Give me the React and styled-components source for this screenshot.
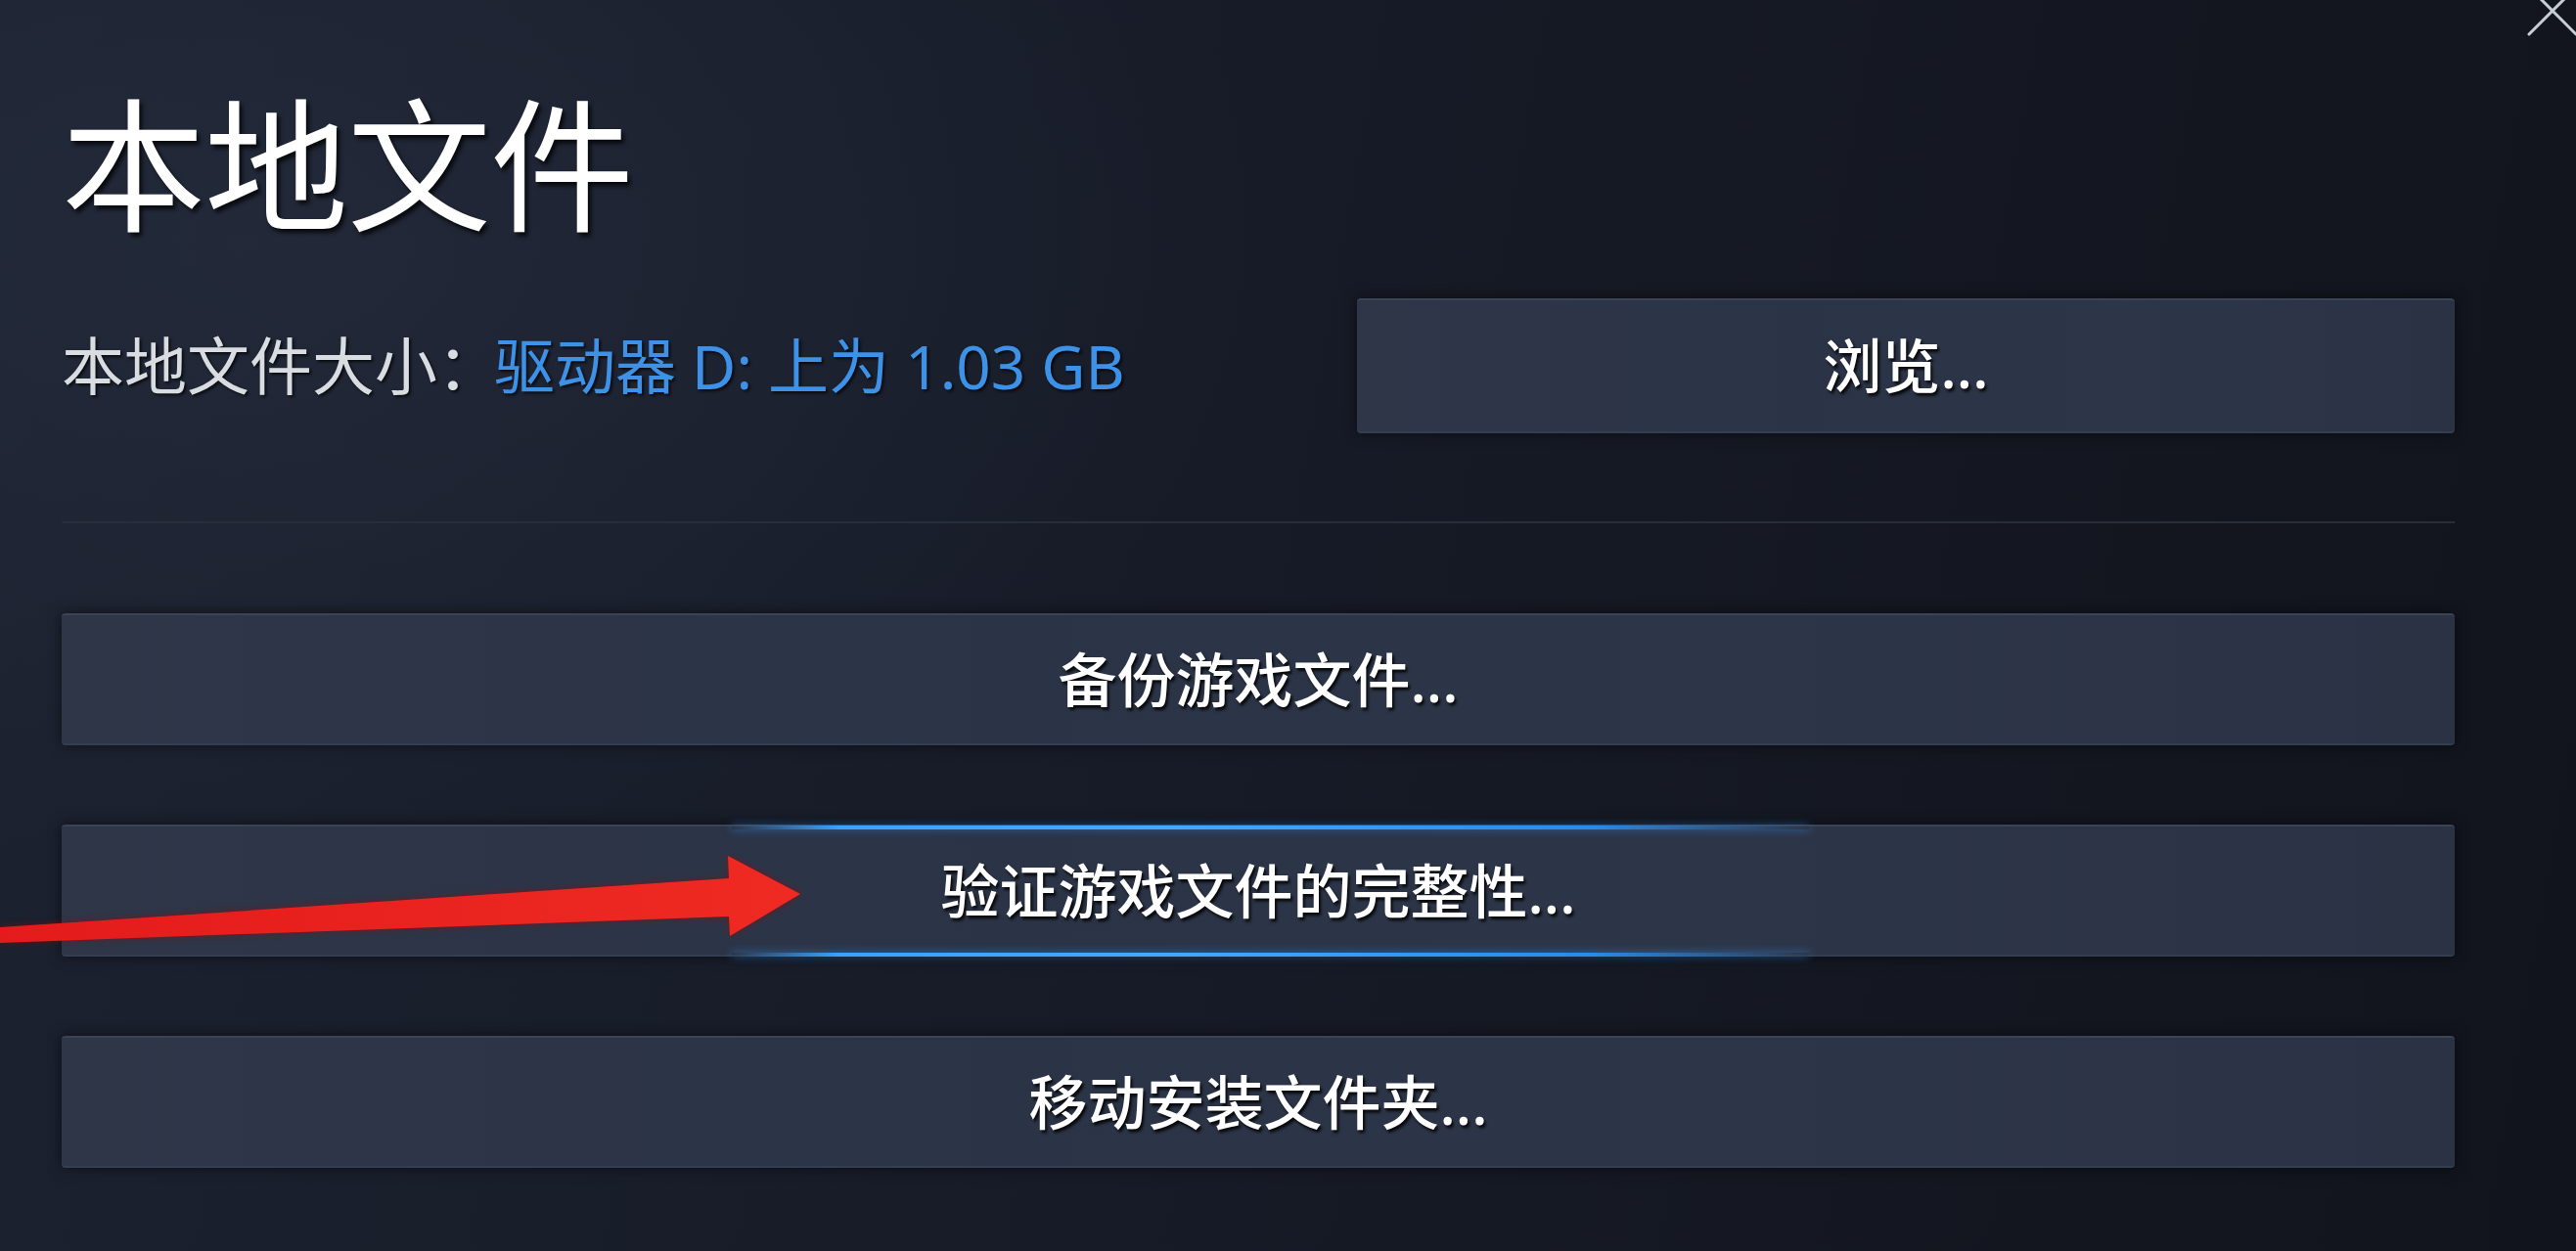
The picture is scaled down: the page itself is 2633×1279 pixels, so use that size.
import React from "react";
import styled, { createGlobalStyle, css } from "styled-components";

const GlobalStyle = createGlobalStyle`
  html, body {
    margin: 0;
    padding: 0;
    background: #151923;
  }
  * { box-sizing: border-box; }
`;

const FONT = `"Noto Sans", "Noto Sans CJK SC", sans-serif`;

const Page = styled.div`
  position: relative;
  width: 2633px;
  height: 1279px;
  overflow: hidden;
  padding: 95px 124px 0 63px;
  font-family: ${FONT};
  background:
    radial-gradient(ellipse 1500px 900px at 250px 250px, rgba(40, 48, 66, 0.55), transparent 70%),
    linear-gradient(100deg, #1c2230 0%, #171b27 45%, #11141c 100%);
`;

const Title = styled.h1`
  margin: 0;
  font-size: 147px;
  line-height: 147px;
  font-weight: 400;
  color: #ffffff;
  letter-spacing: -1px;
  text-shadow: 3px 4px 4px rgba(0, 0, 0, 0.75);
`;

const SizeRow = styled.div`
  display: flex;
  align-items: center;
  justify-content: space-between;
  margin-top: 63px;
  height: 138px;
`;

const SizeLabel = styled.div`
  font-size: 64px;
  line-height: 1;
  color: #d9dde2;
  text-shadow: 2px 2px 3px rgba(0, 0, 0, 0.7);
  white-space: nowrap;
`;

const SizeValue = styled.span`
  margin-left: -6px;
  font-size: 62px;
  color: #3d92e8;
`;

const Button = styled.div`
  position: relative;
  display: flex;
  align-items: center;
  justify-content: center;
  height: ${(p) => p.$h || 135}px;
  width: ${(p) => (p.$w ? `${p.$w}px` : "100%")};
  flex: ${(p) => (p.$w ? "0 0 auto" : "initial")};
  border-radius: 4px;
  background: linear-gradient(90deg, #2e3648 0%, #2b3446 40%, #2d3648 70%, #2a3244 100%);
  border-top: 2px solid #3a4456;
  border-bottom: 2px solid #343e50;
  box-shadow: 0 0 14px rgba(0, 0, 0, 0.55);
  color: #ffffff;
  font-size: 60px;
  font-weight: 500;
  line-height: 1;
  text-shadow: 2px 3px 3px rgba(0, 0, 0, 0.85);
  white-space: nowrap;

  ${(p) =>
    p.$focused &&
    css`
      &::before,
      &::after {
        content: "";
        position: absolute;
        left: 28%;
        width: 45%;
        height: 4px;
        background: linear-gradient(
          90deg,
          rgba(40, 140, 255, 0) 0%,
          #3aa2ff 10%,
          #45a8ff 40%,
          #2a8ae8 80%,
          rgba(40, 140, 255, 0) 100%
        );
        box-shadow: 0 0 8px rgba(50, 150, 255, 0.6);
      }
      &::before { top: -1px; }
      &::after { bottom: -2px; }
    `}
`;

const Divider = styled.div`
  margin-top: 90px;
  height: 2px;
  background: #272d39;
`;

const ActionList = styled.div`
  display: flex;
  flex-direction: column;
  gap: 81px;
  margin-top: 92px;
`;

const Overlay = styled.svg`
  position: absolute;
  pointer-events: none;
`;

function CloseIcon() {
  return (
    <Overlay
      style={{ right: 0, top: 0 }}
      width="50"
      height="40"
      viewBox="0 0 50 40"
    >
      <line x1="2" y1="35" x2="50" y2="-13" stroke="#c7ced6" strokeWidth="3" strokeLinecap="round" />
      <line x1="2" y1="-13" x2="50" y2="35" stroke="#c7ced6" strokeWidth="3" strokeLinecap="round" />
    </Overlay>
  );
}

function RedArrow() {
  return (
    <Overlay style={{ left: 0, top: 860 }} width="830" height="110" viewBox="0 860 830 110">
      <defs>
        <linearGradient id="arrowFill" x1="0" y1="0" x2="1" y2="0">
          <stop offset="0" stopColor="#e31b1c" />
          <stop offset="1" stopColor="#ef2a22" />
        </linearGradient>
      </defs>
      <polygon
        points="0,948 745,898 744,875 818,914 746,957 745,937 0,964"
        fill="url(#arrowFill)"
        style={{ filter: "drop-shadow(0 0 3px rgba(160,0,0,0.6))" }}
      />
    </Overlay>
  );
}

export default function App() {
  return (
    <>
      <GlobalStyle />
      <Page>
        <Title>本地文件</Title>
        <SizeRow>
          <SizeLabel>
            本地文件大小：<SizeValue>驱动器 D: 上为 1.03 GB</SizeValue>
          </SizeLabel>
          <Button $w={1122} $h={138}>浏览...</Button>
        </SizeRow>
        <Divider />
        <ActionList>
          <Button>备份游戏文件...</Button>
          <Button $focused>验证游戏文件的完整性...</Button>
          <Button>移动安装文件夹...</Button>
        </ActionList>
        <RedArrow />
        <CloseIcon />
      </Page>
    </>
  );
}
